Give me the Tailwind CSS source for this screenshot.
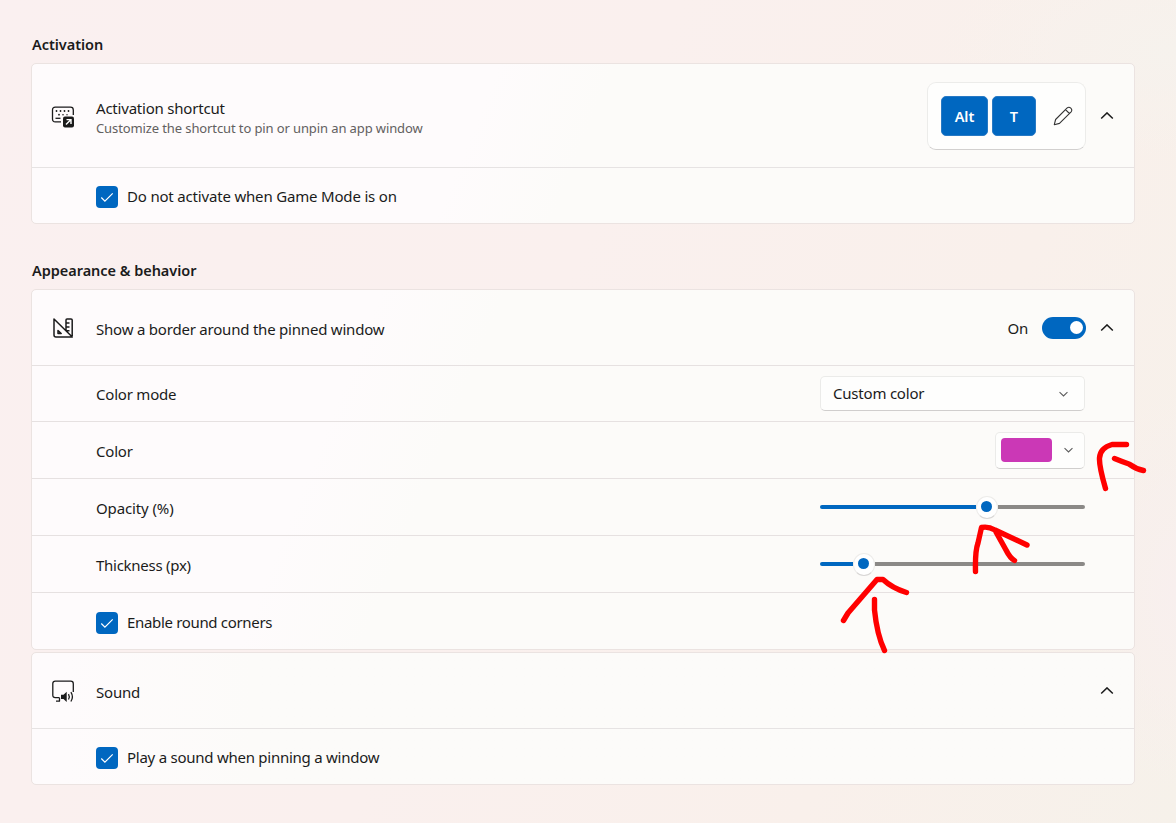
<!DOCTYPE html>
<html lang="en">
<head>
<meta charset="utf-8">
<title>Always On Top settings</title>
<script src="https://cdn.jsdelivr.net/npm/@tailwindcss/browser@4"></script>
</head>
<body class="relative h-[823px] w-[1176px] overflow-hidden bg-[radial-gradient(ellipse_240px_110px_at_1176px_50px,#f6f2ed,transparent),radial-gradient(ellipse_90px_200px_at_1176px_590px,#f8efee,transparent),linear-gradient(112deg,#faf0f0_0%,#faf0ee_45%,#f9f0eb_75%,#f6f1ea_100%)] font-['Noto_Sans',sans-serif] text-[15px] leading-5 tracking-[-0.21px] text-[#1b1b1b]">
<main class="flex flex-col pl-[31px] pt-[34px]">
  <h2 class="h-[29px] pl-px text-[14.5px] font-semibold tracking-[-0.04px]"><span>Activation</span></h2>
  <section class="h-[161px] w-[1104px] rounded-[5px] border border-[#ebe3e1] bg-[linear-gradient(112deg,#fefbfc_40%,#fcfbf9_50%)]">
    <div class="flex h-[103px] items-center">
      <svg class="ml-[19px] mt-0.5 size-6 shrink-0" viewBox="0 0 24 24" fill="none" stroke="#1b1b1b" stroke-width="1.3"><path d="M10 16.8H4.300Q1.500 16.800 1.500 14V5Q1.500 2.200 4.300 2.200H19.500Q22.300 2.200 22.300 5V10"/><g fill="#1b1b1b" stroke="none"><circle cx="5.500" cy="6" r=".9"/><circle cx="9.500" cy="6" r=".9"/><circle cx="13.500" cy="6" r=".9"/><circle cx="17.500" cy="6" r=".9"/><circle cx="8" cy="9.700" r=".9"/><circle cx="12" cy="9.700" r=".8"/><circle cx="16" cy="9.700" r=".7"/><rect x="12" y="11.500" width="11" height="11" rx="2"/></g><path d="M4.500 13.300h5"/><path stroke="#fff" stroke-width="1.4" d="M15 19.500l4.800-4.800M15.500 14.600H20v4.500"/></svg>
      <div class="ml-[21px] mt-1 w-[400px]">
        <p class="h-5"><span>Activation shortcut</span></p>
        <p class="h-5 text-[13px] tracking-[-0.11px] text-[#626060]"><span>Customize the shortcut to pin or unpin an app window</span></p>
      </div>
      <div class="ml-auto flex h-[68px] w-[159px] items-center gap-[5px] rounded-[9px] border border-[#ececea] border-b-[#d2d0cf] bg-[#fefefd] pl-[13px] font-semibold tracking-normal text-white">
        <kbd class="flex h-10 w-[47px] items-center justify-center rounded-[5px] border border-[#2779c4] bg-[#0067c0] font-['Noto_Sans',sans-serif] text-[14.5px]">Alt</kbd>
        <kbd class="-ml-px flex h-10 w-11 items-center justify-center rounded-[5px] border border-[#2779c4] bg-[#0067c0] font-['Noto_Sans',sans-serif] text-[14.5px]">T</kbd>
        <svg class="ml-3 size-5" viewBox="0 0 20 20" fill="none" stroke="#333" stroke-width="1.1" stroke-linejoin="round"><path d="M1.3 18.7l1.3-5.2L14.2 1.9Q16 .5 17.8 2.2T18.1 5.8L6.500 17.400ZM12.500 3.600l3.900 3.900"/></svg>
      </div>
      <svg class="ml-[14px] mr-5 h-2 w-[14px]" viewBox="0 0 14 8" fill="none" stroke="#1b1b1b" stroke-width="1.5"><path d="M1.200 6.500L7 .900l5.800 5.600"/></svg>
    </div>
    <div class="flex h-14 items-center border-t border-[#e6e3e3] pl-16 pt-[3px]">
      <svg class="size-[22px] rounded-[4px] bg-[#0067c0]" viewBox="0 0 22 22" fill="none" stroke="#fff" stroke-width="1.2"><path d="M5.300 11.500l3.600 3.600 7.800-7.800"/></svg>
      <span class="-mt-0.5 ml-[9px] tracking-[-0.18px]">Do not activate when Game Mode is on</span>
    </div>
  </section>

  <h2 class="mt-9 h-[30px] pl-px text-[14.5px] font-semibold tracking-[-0.04px]"><span>Appearance &amp; behavior</span></h2>
  <section class="-mt-px h-[361px] w-[1104px] rounded-[5px] border border-[#ebe3e1] bg-[linear-gradient(112deg,#fefbfc_28%,#fcfbf9_38%)]">
    <div class="flex h-[75px] items-center">
      <svg class="ml-5 size-6 shrink-0" viewBox="0 0 24 24" fill="none" stroke="#1b1b1b" stroke-width="1.5" stroke-linejoin="round"><path d="M2 3V19Q2 21 4 21H20.300ZM6 14.500V17.500H9.200ZM14 14V4Q14 3 15 3H19Q20.200 3 20.200 4V20M14 7h3.500M14 11h3.500M14 14.700h3.500"/></svg>
      <span class="ml-5 mt-0.5">Show a border around the pinned window</span>
      <span class="ml-auto">On</span>
      <span class="ml-[14px] flex h-[22px] w-11 items-center justify-end rounded-full bg-[#0067c0] pr-[3px]"><span class="size-[13px] rounded-full bg-white"></span></span>
      <svg class="ml-[14px] mr-5 h-2 w-[14px]" viewBox="0 0 14 8" fill="none" stroke="#1b1b1b" stroke-width="1.5"><path d="M1.200 6.500L7 .900l5.800 5.600"/></svg>
    </div>
    <div class="flex h-14 items-center justify-between border-t border-[#e6e1e1] pl-16 pr-[49px]">
      <span>Color mode</span>
      <div class="flex h-[35px] w-[265px] items-center justify-between rounded-[5px] border border-[#ebebe9] border-b-[#d0cecd] bg-[#fefefd] pl-3 pr-4"><span class="-mt-0.5">Custom color</span><svg class="h-[6px] w-[9px]" viewBox="0 0 10 6" fill="none" stroke="#5c5c5c" stroke-width="1.2"><path d="M.6.8L5 5.200 9.400.8"/></svg></div>
    </div>
    <div class="flex h-[57px] items-center justify-between border-t border-[#e6e1e1] pl-16 pr-[49px]">
      <span class="mt-px">Color</span>
      <div class="flex h-[37px] w-[90px] items-center rounded-[5px] border border-[#ebebe9] border-b-[#d0cecd] bg-[#fefefd] pl-[5px]"><span class="-mt-px h-6 w-[51px] rounded-[4px] bg-[#cb38b6]"></span><svg class="-mt-px ml-3 h-[6px] w-[9px]" viewBox="0 0 10 6" fill="none" stroke="#5c5c5c" stroke-width="1.2"><path d="M.6.8L5 5.200 9.400.8"/></svg></div>
    </div>
    <div class="flex h-[57px] items-center justify-between border-t border-[#e6e1e1] pl-16 pr-[49px]">
      <span class="mt-px tracking-[-0.12px]">Opacity (%)</span>
      <div class="flex h-6 w-[265px] items-center"><span class="h-1 w-[156px] rounded-l-full bg-[#0067c0]"></span><span class="flex h-[23px] w-[22px] items-start justify-start rounded-full border border-[#edecea] border-b-[#d8d6d5] bg-white pl-1 pt-1"><span class="size-[11px] rounded-full bg-[#0067c0]"></span></span><span class="h-1 grow rounded-r-full bg-[#8b8987]"></span></div>
    </div>
    <div class="flex h-[57px] items-center justify-between border-t border-[#e6e1e1] pl-16 pr-[49px]">
      <span class="mt-px tracking-[-0.27px]">Thickness (px)</span>
      <div class="flex h-6 w-[265px] items-center"><span class="h-1 w-[33px] rounded-l-full bg-[#0067c0]"></span><span class="flex h-[23px] w-[22px] items-start justify-start rounded-full border border-[#edecea] border-b-[#d8d6d5] bg-white pl-1 pt-1"><span class="size-[11px] rounded-full bg-[#0067c0]"></span></span><span class="h-1 grow rounded-r-full bg-[#8b8987]"></span></div>
    </div>
    <div class="flex h-[57px] items-center border-t border-[#e6e1e1] pl-16 pt-[3px]">
      <svg class="size-[22px] rounded-[4px] bg-[#0067c0]" viewBox="0 0 22 22" fill="none" stroke="#fff" stroke-width="1.2"><path d="M5.300 11.500l3.600 3.600 7.800-7.800"/></svg>
      <span class="-mt-0.5 ml-[9px] tracking-[-0.33px]">Enable round corners</span>
    </div>
  </section>

  <section class="mt-0.5 h-[133px] w-[1104px] rounded-[5px] border border-[#ebe3e1] bg-linear-to-r from-[#fefbfc] from-3% to-[#fcfbf9] to-20%">
    <div class="flex h-[75px] items-center">
      <svg class="ml-5 mt-[3px] size-6 shrink-0" viewBox="0 0 24 24" fill="none" stroke="#1b1b1b" stroke-width="1.3"><path d="M7.500 17.700H3.300Q.8 17.700.8 15.200V3.500Q.8 1.200 3.300 1.200H18.800Q21.300 1.200 21.300 3.700V12M7.500 17.700v3.500M4 21.200h4"/><path fill="#1b1b1b" stroke="none" d="M9 14.800H11.500l3.200-3V22L11.500 19H9Z"/><path stroke-width="1.3" d="M16.500 14.100q1.600 2.700 0 5.400M18.900 12.100q3 4.700 0 9.400"/></svg>
      <span class="ml-5 mt-0.5">Sound</span>
      <svg class="ml-auto mr-5 h-2 w-[14px]" viewBox="0 0 14 8" fill="none" stroke="#1b1b1b" stroke-width="1.5"><path d="M1.200 6.500L7 .900l5.800 5.600"/></svg>
    </div>
    <div class="flex h-14 items-center border-t border-[#e6e3e3] pl-16 pt-[3px]">
      <svg class="size-[22px] rounded-[4px] bg-[#0067c0]" viewBox="0 0 22 22" fill="none" stroke="#fff" stroke-width="1.2"><path d="M5.300 11.500l3.600 3.600 7.800-7.800"/></svg>
      <span class="-mt-0.5 ml-[9px] tracking-[-0.25px]">Play a sound when pinning a window</span>
    </div>
  </section>
</main>
<!-- Hand-drawn annotation arrows over the settings -->
<svg class="pointer-events-none absolute inset-0 h-[823px] w-[1176px]" viewBox="0 0 1176 823" fill="none" stroke="#ff0000" stroke-width="5.4" stroke-linecap="round" stroke-linejoin="round"><path d="M1126.500 444.500H1112Q1100 448 1099.500 458Q1099 466 1105.500 488.500M1114.500 458.500Q1123 462 1129 464Q1136 469 1143.500 470.500M975.500 571.500Q975 551 978 543L981.500 527.500Q988 526 995 530L1027 545M996 532L1006 550Q1010 558 1014.500 560.500M843.500 620.500L848 613L877 579.500H883Q892 588 906.500 592.500M874.500 599.500V610Q877 635 884.500 650.500"/></svg>
</body>
</html>
